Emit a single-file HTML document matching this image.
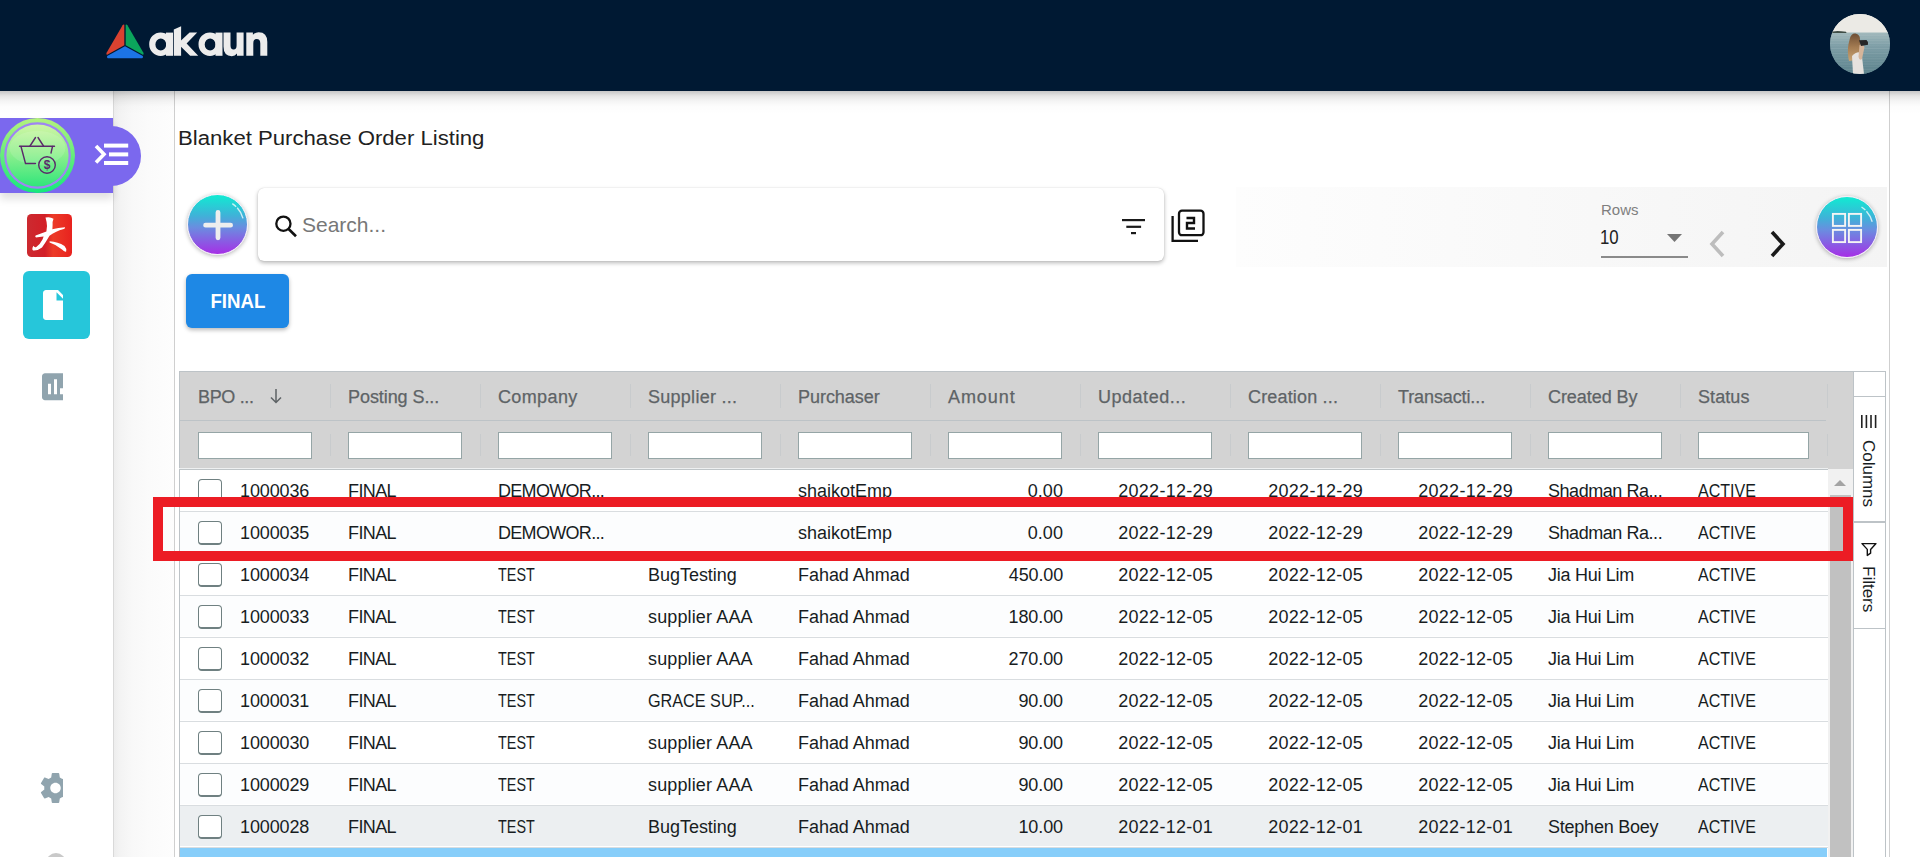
<!DOCTYPE html>
<html><head><meta charset="utf-8">
<style>
*{box-sizing:border-box;margin:0;padding:0}
html,body{width:1920px;height:857px;overflow:hidden;background:#fff;font-family:"Liberation Sans",sans-serif;position:relative}
.abs{position:absolute}
#topbar{left:0;top:0;width:1920px;height:91px;background:#001933;z-index:20}
#topshadow{left:0;top:91px;width:1920px;height:26px;background:linear-gradient(rgba(0,0,0,.22) 0,rgba(0,0,0,.2) 1px,rgba(0,0,0,.1) 5px,rgba(0,0,0,.045) 10px,rgba(0,0,0,.012) 15px,rgba(0,0,0,0) 23px);z-index:19}
#sidebar{left:0;top:91px;width:114px;height:766px;background:#fff;border-right:1px solid #d9d9d9;z-index:3}
#gutter{left:114px;top:91px;width:61px;height:766px;background:linear-gradient(90deg,#ededed 0,#f3f3f3 6px,#f8f8f8 18px,#fbfbfb 35px,#fdfdfd 60px);border-right:1px solid #cfcfcf;z-index:2}
#page{left:175px;top:91px;width:1715px;height:766px;background:#fff;border-right:1px solid #cfcfcf;z-index:1}
.title{left:178px;top:127px;font-size:20px;transform:scaleX(1.107);transform-origin:0 0;color:#212121;white-space:nowrap;z-index:4}
#logo-text{left:149px;top:15px;font-size:41px;font-weight:bold;color:#ececec;letter-spacing:-1px;z-index:21}
#avatar{left:1830px;top:14px;width:60px;height:60px;border-radius:50%;overflow:hidden;z-index:21;
  background:linear-gradient(#e9e7e2 0,#e9e7e2 28%,#8fa3a8 30%,#5f7f89 60%,#6b8a93 100%)}
/* purple bar */
#pbar{left:0;top:118px;width:113px;height:75px;background:#7b68ee;z-index:10;box-shadow:0 6px 8px rgba(0,0,0,.12)}
#pcap{left:80px;top:126px;width:61px;height:60px;border-radius:0 30px 30px 0;background:#7b68ee;z-index:10}
#gcircle{left:0;top:118px;width:75px;height:75px;border-radius:50%;background:#73ef7e;z-index:11}
#gcircle2{left:5px;top:123px;width:65px;height:65px;border-radius:50%;border:1.5px solid #9b7fe0;
  background:linear-gradient(#d6f7b4,#9cef8e 50%,#3fe06a);z-index:12}
/* toolbar */
#addfab{left:187px;top:194px;width:61px;height:61px;border-radius:50%;background:linear-gradient(#10ebd2,#3fb2d8 35%,#6a8de0 55%,#a62fe6);box-shadow:0 1px 4px rgba(0,0,0,.3);border:1.5px solid #f4eef8;z-index:4}
#search{left:258px;top:188px;width:906px;height:73px;border-radius:6px;background:#fff;box-shadow:0 2px 4px rgba(0,0,0,.28),0 0 1px rgba(0,0,0,.2);z-index:4}
#searchtxt{left:302px;top:213px;font-size:21px;color:#777;z-index:5}
#rowsbar{left:1236px;top:187px;width:651px;height:80px;background:linear-gradient(90deg,#fdfdfd 0%,#f8f8f8 55%,#f4f4f4 100%);z-index:3}
#rowslbl{left:1601px;top:201px;font-size:15px;color:#7f7f7f;z-index:4}
#rows10{left:1600px;top:226px;font-size:20px;color:#222;transform:scaleX(.84);transform-origin:0 0;z-index:4}
#rowsline{left:1601px;top:256px;width:87px;height:2px;background:#8a8a8a;z-index:4}
#gridfab{left:1816px;top:196px;width:62px;height:62px;border-radius:50%;background:linear-gradient(#10ebd2,#3fb2d8 35%,#6a8de0 55%,#a62fe6);box-shadow:0 1px 4px rgba(0,0,0,.3);border:1.5px solid #f4eef8;z-index:4}
#finalbtn{left:186px;top:274px;width:103px;height:54px;border-radius:6px;background:#1e88e5;box-shadow:0 2px 4px rgba(0,0,0,.28);color:#fff;font-weight:bold;font-size:21px;line-height:54px;text-align:center;z-index:4}
#finalbtn span{display:inline-block;transform:scaleX(.89);position:relative;top:-0.5px}
/* table */
#thead{left:179px;top:371px;width:1674px;height:98px;background:#d3d3d3;border-top:1px solid #bdc3c7;border-left:1px solid #bdc3c7;z-index:4}
#tbody{left:179px;top:469px;width:1674px;height:388px;background:#fff;border-left:1px solid #bdc3c7;border-top:1px solid #bdc3c7;z-index:4;overflow:hidden}
#hdline{left:179px;top:420px;width:1647px;height:1px;background:#bdc3c7;z-index:6}
#hdbot{left:179px;top:468px;width:1649px;height:2px;border-top:1px solid #eef0f1;background:#bfc5c8;z-index:6}
.hd{top:386.5px;font-size:18px;letter-spacing:-0.35px;color:#5e6366;-webkit-text-stroke:0.25px #5e6366;white-space:nowrap;z-index:6}
.fin{top:432px;height:27px;background:#fff;border:1px solid #95a5a6;z-index:6}
.sep1{top:384px;width:1px;height:24px;background:rgba(189,195,199,.5);z-index:6}
.sep2{top:434px;width:1px;height:22px;background:rgba(189,195,199,.5);z-index:6}
.arrow{left:270px;top:384px;font-size:18px;color:#646464;z-index:6}
.row{left:180px;width:1648px;height:42px;border-bottom:1px solid #d9dde0;box-shadow:inset 0 -1px 0 #fff;z-index:5}
.cb{left:18px;top:9px;width:24px;height:24px;border:1.6px solid #6f8081;border-bottom-width:2px;border-radius:4px;background:#fff}
.cell{top:10.5px;font-size:18px;letter-spacing:-0.4px;color:#181d1f;white-space:nowrap}
.cell.r{text-align:right}
#bluerow{left:180px;top:848px;width:1647px;height:12px;background:#87cefa;z-index:5}
#scroll{left:1828px;top:469px;width:25px;height:388px;background:#f1f1f1;z-index:6}
#thumb{left:1830px;top:495px;width:21px;height:362px;background:#c1c1c1;z-index:7}
#sidepanel{left:1853px;top:371px;width:33px;height:500px;background:#fff;border:1px solid #bdc3c7;z-index:6}
#redbox{left:153px;top:497px;width:1700px;height:64px;border:10px solid #ec1c24;z-index:15}
/* sidebar icons */
#cyansq{left:23px;top:271px;width:67px;height:68px;border-radius:6px;background:#26c6da;z-index:4}
</style></head><body>
<div id="topbar" class="abs"></div>
<div id="topshadow" class="abs"></div>
<div id="sidebar" class="abs"></div>
<div id="gutter" class="abs"></div>
<div id="page" class="abs"></div>

<!-- logo -->
<svg class="abs" style="left:0;top:0;z-index:21" width="300" height="91" viewBox="0 0 300 91">
  <path d="M124.3 24.8 Q123.5 24 122.6 25.2 L106.6 52.8 Q105.6 55 107.6 54.6 L124.3 45.2 Z" fill="#d94230"/>
  <path d="M125.7 24.8 Q126.5 24 127.4 25.2 L143.4 52.8 Q144.4 55 142.4 54.6 L125.7 45.2 Z" fill="#0ba55c"/>
  <path d="M125 46.3 L142.8 56 Q143.6 58.3 141 58.3 L109 58.3 Q106.4 58.3 107.2 56 Z" fill="#1c74e6"/>
  <g fill="#ececec" fill-rule="evenodd">
    <path d="M160.6 32.4 A11.4 11.8 0 1 0 160.6 56 A11.4 11.8 0 1 0 160.6 32.4 Z M160.8 38.4 A5.4 6 0 1 1 160.8 50.4 A5.4 6 0 1 1 160.8 38.4 Z"/>
    <rect x="166" y="32.6" width="7" height="23.2"/>
    <path d="M173.8 29.6 L181.1 26.2 L181.1 55.8 L173.8 55.8 Z"/>
    <path d="M180.5 41 L189.6 32.6 L197.2 32.6 L186.6 43.4 L198.2 55.8 L190.2 55.8 L180.5 46.2 Z"/>
    <path d="M209.9 32.4 A11.4 11.8 0 1 0 209.9 56 A11.4 11.8 0 1 0 209.9 32.4 Z M210.1 38.4 A5.4 6 0 1 1 210.1 50.4 A5.4 6 0 1 1 210.1 38.4 Z"/>
    <rect x="215.5" y="32.6" width="7" height="23.2"/>
    <path d="M223.5 32.6 H230.5 V45.2 Q230.5 49.6 233.6 49.6 Q236.6 49.6 236.6 45.2 V32.6 H243.6 V55.8 H237 V53.6 Q235 56.2 231.8 56.2 Q223.5 56.2 223.5 46.6 Z"/>
    <path d="M246.3 55.8 H253.3 V43.4 Q253.3 39 256.6 39 Q260.3 39 260.3 43.4 V55.8 H267.3 V42 Q267.3 32.2 258.6 32.2 Q255.2 32.2 252.9 34.8 V32.6 H246.3 Z"/>
  </g>
</svg>
<div id="avatar" class="abs">
  <svg width="60" height="60" viewBox="1830 14 60 60">
    <defs>
      <linearGradient id="sea" x1="0" y1="0" x2="0" y2="1"><stop offset="0" stop-color="#a3babd"/><stop offset=".3" stop-color="#7f9fa7"/><stop offset="1" stop-color="#5a818b"/></linearGradient>
      <linearGradient id="hair" x1="0" y1="0" x2="0" y2="1"><stop offset="0" stop-color="#6e4e34"/><stop offset=".5" stop-color="#a47c52"/><stop offset="1" stop-color="#c9a473"/></linearGradient>
    </defs>
    <rect x="1830" y="14" width="60" height="19" fill="#ebeae5"/>
    <rect x="1830" y="32.5" width="60" height="42" fill="url(#sea)"/>
    <rect x="1830" y="35.0" width="60" height="0.9" fill="rgba(255,255,255,0.06)"/><rect x="1830" y="37.6" width="60" height="0.9" fill="rgba(255,255,255,0.1)"/><rect x="1830" y="40.2" width="60" height="0.9" fill="rgba(255,255,255,0.06)"/><rect x="1830" y="42.8" width="60" height="0.9" fill="rgba(255,255,255,0.1)"/><rect x="1830" y="45.4" width="60" height="0.9" fill="rgba(255,255,255,0.06)"/><rect x="1830" y="48.0" width="60" height="0.9" fill="rgba(255,255,255,0.1)"/><rect x="1830" y="50.6" width="60" height="0.9" fill="rgba(255,255,255,0.06)"/><rect x="1830" y="53.2" width="60" height="0.9" fill="rgba(255,255,255,0.1)"/><rect x="1830" y="55.8" width="60" height="0.9" fill="rgba(255,255,255,0.06)"/><rect x="1830" y="58.4" width="60" height="0.9" fill="rgba(255,255,255,0.1)"/><rect x="1830" y="61.0" width="60" height="0.9" fill="rgba(255,255,255,0.06)"/><rect x="1830" y="63.6" width="60" height="0.9" fill="rgba(255,255,255,0.1)"/><rect x="1830" y="66.2" width="60" height="0.9" fill="rgba(255,255,255,0.06)"/><rect x="1830" y="68.8" width="60" height="0.9" fill="rgba(255,255,255,0.1)"/><rect x="1830" y="71.4" width="60" height="0.9" fill="rgba(255,255,255,0.06)"/>
    <path d="M1830 33 L1833 31.4 Q1838 30.6 1846 31.8 L1846.5 33 Z" fill="#3f4d46"/>
    <path d="M1850 38 Q1851.5 33 1855.5 33.5 Q1860 34.5 1860 39 L1860.5 48 Q1859 56 1856 60 L1849 61 Q1847 52 1848.5 44 Z" fill="url(#hair)"/>
    <path d="M1852 56 Q1856 51 1861.5 52.5 L1864 74 L1853 74 Z" fill="#e6e2de"/>
    <path d="M1859.5 45 Q1863 43 1864.5 47 L1862 59 Q1859.5 61 1858.5 57 Z" fill="#d6b59a"/>
    <path d="M1859 40.2 L1866.5 40 Q1868.6 41.5 1868 44.8 L1861 46 Z" fill="#262626"/>
  </svg>
</div>

<!-- purple menu bar -->
<div id="pbar" class="abs"></div>
<div id="pcap" class="abs"></div>
<svg class="abs" style="left:0;top:117px;z-index:11" width="76" height="77" viewBox="0 117 76 77">
  <defs>
    <linearGradient id="gr1" x1="0" y1="0" x2="0" y2="1"><stop offset="0" stop-color="#b5f27c"/><stop offset="1" stop-color="#14e87c"/></linearGradient>
    <linearGradient id="gr2" x1="0" y1="0" x2="0" y2="1"><stop offset="0" stop-color="#d2f6a6"/><stop offset=".45" stop-color="#92f08e"/><stop offset="1" stop-color="#2ee57a"/></linearGradient>
  </defs>
  <circle cx="37.5" cy="155.5" r="37.5" fill="url(#gr1)"/>
  <circle cx="37.5" cy="155.5" r="32.2" fill="url(#gr2)" stroke="#9f85f2" stroke-width="2.2"/>
  <ellipse cx="37.5" cy="148" rx="28" ry="17" fill="rgba(255,255,255,.12)"/>
  <g fill="none" stroke="#5a2a6a" stroke-width="1.4" stroke-linejoin="round" stroke-linecap="round">
    <path d="M19.5 146.3 L54.5 146.3"/>
    <path d="M30 146 L35.5 137.5 M38 137.5 L43.5 146"/>
    <path d="M21 146.5 L25.5 163.5 L35.5 163.5"/>
    <path d="M52.5 146.5 L51 153"/>
    <circle cx="47" cy="165" r="8.3"/>
  </g>
  <text x="47" y="169.3" font-size="12" font-family="Liberation Sans" font-weight="bold" fill="#5a2a6a" text-anchor="middle">$</text>
</svg>
<svg class="abs" style="left:90px;top:138px;z-index:13" width="42" height="32" viewBox="90 138 42 32">
  <path d="M96 146 L104 154.3 L96 162.6" fill="none" stroke="#fff" stroke-width="3.6"/>
  <rect x="104" y="143.6" width="24.2" height="4" fill="#fff"/>
  <rect x="109" y="152.4" width="19.2" height="4" fill="#fff"/>
  <rect x="104" y="161" width="24.2" height="4" fill="#fff"/>
</svg>

<!-- sidebar icons -->
<svg class="abs" style="left:27px;top:214px;z-index:4" width="45" height="43" viewBox="0 0 45 43">
  <defs><linearGradient id="rg" x1="0" x2="1"><stop offset="0" stop-color="#cc2a30"/><stop offset=".4" stop-color="#d21f27"/><stop offset=".58" stop-color="#ec3b28"/><stop offset="1" stop-color="#e8221e"/></linearGradient></defs>
  <rect x="0" y="0" width="45" height="43" rx="4.5" fill="url(#rg)"/>
  <path d="M18.5 3.6 Q23 2.4 26.5 4.8 Q25.2 8 25.6 11 L25.4 15.2 Q31 13.6 38 13.3 Q38.5 14.2 36.8 15 Q28 17.5 22.5 21.8 Q19 28 15 33.5 Q11 36.8 6 36.4 Q4.8 35.6 5.6 33.6 L6.4 31.8 Q7.2 33.6 9 33.2 Q13 30.5 15.5 25.5 L16.6 22.6 Q12 23.2 9 23.6 Q7.6 22.6 8.6 21.6 Q14 19.2 19.4 17.4 Q20.6 12 19.6 8 Z" fill="#fff"/>
  <path d="M22.6 27.2 Q31 27.6 37.5 32 Q40 34.8 39.2 37.6 Q37.4 38.2 35 35.6 Q29 30.6 22.6 28.6 Z" fill="#fff"/>
</svg>
<div id="cyansq" class="abs"></div>
<svg class="abs" style="left:0;top:91px;z-index:5" width="63" height="766" viewBox="0 91 63 766">
  <path transform="translate(37,287) scale(1.5)" d="M6 2c-1.1 0-2 .9-2 2L4 20c0 1.1.89 2 1.99 2H18c1.1 0 2-.9 2-2V8l-6-6H6zm7 7V3.5L18.5 9H13z" fill="#fff"/>
  <path transform="translate(37.5,368.8) scale(1.5)" d="M19 3H5c-1.1 0-2 .9-2 2v14c0 1.1.9 2 2 2h14c1.1 0 2-.9 2-2V5c0-1.1-.9-2-2-2zM9 17H7v-7h2v7zm4 0h-2V7h2v10zm4 0h-2v-4h2v4z" fill="#90a4ae"/>
  <path transform="translate(37.5,770) scale(1.5)" d="M19.43 12.98c.04-.32.07-.64.07-.98s-.03-.66-.07-.98l2.11-1.65c.19-.15.24-.42.12-.64l-2-3.46c-.12-.22-.39-.3-.61-.22l-2.49 1c-.52-.4-1.08-.73-1.690-.98l-.38-2.65C14.46 2.18 14.25 2 14 2h-4c-.25 0-.46.18-.49.42l-.38 2.65c-.61.25-1.17.59-1.69.98l-2.49-1c-.23-.09-.49 0-.61.22l-2 3.46c-.13.22-.07.49.12.64l2.110 1.65c-.04.32-.07.65-.07.98s.03.66.07.98l-2.11 1.65c-.19.15-.24.42-.12.64l2 3.46c.12.22.39.3.61.22l2.49-1c.52.4 1.08.73 1.69.98l.38 2.65c.03.24.24.42.49.42h4c.25 0 .46-.18.49-.42l.38-2.65c.61-.25 1.17-.59 1.69-.98l2.49 1c.23.09.49 0 .61-.22l2-3.46c.12-.22.07-.49-.12-.64l-2.11-1.65zM12 15.5c-1.93 0-3.5-1.57-3.5-3.5s1.57-3.5 3.5-3.5 3.5 1.57 3.5 3.5-1.57 3.5-3.5 3.5z" fill="#90a4ae"/>
</svg>
<div class="abs" style="left:46px;top:853px;width:20px;height:20px;border-radius:50%;background:#c9c9c9;z-index:4"></div>

<div class="abs title">Blanket Purchase Order Listing</div>

<!-- toolbar -->
<div id="addfab" class="abs"></div>
<svg class="abs" style="left:182px;top:188px;z-index:5" width="72" height="72" viewBox="182 188 72 72">
  <path d="M218 212.4 L218 237.8 M205.6 225.2 L230.6 225.2" stroke="#eeeeee" stroke-width="4.8" stroke-linecap="round"/>
  <path d="M232.3 203.6 A25.5 25.5 0 0 1 243 218.4" fill="none" stroke="rgba(255,255,255,.75)" stroke-width="1.4" stroke-dasharray="5 1.5 20"/>
</svg>
<div id="search" class="abs"></div>
<svg class="abs" style="left:274px;top:214px;z-index:5" width="24" height="24" viewBox="0 0 24 24">
  <circle cx="9.4" cy="9.7" r="7.1" fill="none" stroke="#111" stroke-width="2.3"/>
  <path d="M14.6 15 L22 22.3" stroke="#111" stroke-width="2.6"/>
</svg>
<div id="searchtxt" class="abs">Search...</div>
<svg class="abs" style="left:1122px;top:219px;z-index:5" width="24" height="16" viewBox="0 0 24 16">
  <rect x="0" y="0" width="23" height="2.2" fill="#1a1a1a"/>
  <rect x="4.3" y="6.7" width="14.8" height="2.2" fill="#1a1a1a"/>
  <rect x="9" y="13" width="5" height="2.2" fill="#1a1a1a"/>
</svg>
<svg class="abs" style="left:1171px;top:209px;z-index:5" width="34" height="34" viewBox="0 0 34 34">
  <path d="M1.6 7 L1.6 31.8 L27 31.8" fill="none" stroke="#111" stroke-width="2.3"/>
  <rect x="8" y="1.7" width="24.5" height="24.5" rx="3" fill="none" stroke="#111" stroke-width="2.3"/>
  <path d="M15.5 9 L23 9 L23 14 L16 14 L16 19.5 L24 19.5" fill="none" stroke="#111" stroke-width="2.4"/>
</svg>

<div id="rowsbar" class="abs"></div>
<div id="rowslbl" class="abs">Rows</div>
<div id="rows10" class="abs">10</div>
<div id="rowsline" class="abs"></div>
<svg class="abs" style="left:1667px;top:234px;z-index:5" width="15" height="8" viewBox="0 0 15 8"><path d="M0 0 L15 0 L7.5 8 Z" fill="#757575"/></svg>
<svg class="abs" style="left:1707px;top:230px;z-index:5" width="20" height="28" viewBox="0 0 20 28"><path d="M16 2 L5 14 L16 26" fill="none" stroke="#bdbdbd" stroke-width="3.6"/></svg>
<svg class="abs" style="left:1768px;top:230px;z-index:5" width="20" height="28" viewBox="0 0 20 28"><path d="M4 2 L15 14 L4 26" fill="none" stroke="#1a1a1a" stroke-width="3.6"/></svg>
<div id="gridfab" class="abs"></div>
<svg class="abs" style="left:1811px;top:191px;z-index:5" width="72" height="72" viewBox="1811 191 72 72">
  <path d="M1861.5 207 A25.5 25.5 0 0 1 1872.2 221.8" fill="none" stroke="rgba(255,255,255,.75)" stroke-width="1.4" stroke-dasharray="5 1.5 20"/>
</svg>
<svg class="abs" style="left:1825px;top:205px;z-index:5" width="45" height="45" viewBox="1825 205 45 45">
  <g fill="none" stroke="#f4f4f4" stroke-width="1.9">
    <rect x="1832.9" y="213.9" width="12.2" height="12"/>
    <rect x="1848.9" y="213.9" width="12.2" height="12"/>
    <rect x="1832.9" y="229.9" width="12.2" height="12.2"/>
    <rect x="1848.9" y="229.9" width="12.2" height="12.2"/>
  </g>
</svg>

<div id="finalbtn" class="abs"><span>FINAL</span></div>

<!-- table -->
<div id="thead" class="abs"></div>
<div id="hdline" class="abs"></div>
<div id="hdbot" class="abs"></div>
<div id="tbody" class="abs"></div>
<div class="abs hd" style="left:198px;letter-spacing:-0.33px">BPO ...</div>
<div class="abs fin" style="left:198px;width:114px"></div>
<div class="abs sep1" style="left:330px"></div><div class="abs sep2" style="left:330px"></div>
<div class="abs hd" style="left:348px;letter-spacing:-0.07px">Posting S...</div>
<div class="abs fin" style="left:348px;width:114px"></div>
<div class="abs sep1" style="left:480px"></div><div class="abs sep2" style="left:480px"></div>
<div class="abs hd" style="left:498px;letter-spacing:0.37px">Company</div>
<div class="abs fin" style="left:498px;width:114px"></div>
<div class="abs sep1" style="left:630px"></div><div class="abs sep2" style="left:630px"></div>
<div class="abs hd" style="left:648px;letter-spacing:0.27px">Supplier ...</div>
<div class="abs fin" style="left:648px;width:114px"></div>
<div class="abs sep1" style="left:780px"></div><div class="abs sep2" style="left:780px"></div>
<div class="abs hd" style="left:798px;letter-spacing:-0.04px">Purchaser</div>
<div class="abs fin" style="left:798px;width:114px"></div>
<div class="abs sep1" style="left:930px"></div><div class="abs sep2" style="left:930px"></div>
<div class="abs hd" style="left:948px;letter-spacing:0.92px">Amount</div>
<div class="abs fin" style="left:948px;width:114px"></div>
<div class="abs sep1" style="left:1080px"></div><div class="abs sep2" style="left:1080px"></div>
<div class="abs hd" style="left:1098px;letter-spacing:0.52px">Updated...</div>
<div class="abs fin" style="left:1098px;width:114px"></div>
<div class="abs sep1" style="left:1230px"></div><div class="abs sep2" style="left:1230px"></div>
<div class="abs hd" style="left:1248px;letter-spacing:0.17px">Creation ...</div>
<div class="abs fin" style="left:1248px;width:114px"></div>
<div class="abs sep1" style="left:1380px"></div><div class="abs sep2" style="left:1380px"></div>
<div class="abs hd" style="left:1398px;letter-spacing:-0.11px">Transacti...</div>
<div class="abs fin" style="left:1398px;width:114px"></div>
<div class="abs sep1" style="left:1530px"></div><div class="abs sep2" style="left:1530px"></div>
<div class="abs hd" style="left:1548px;letter-spacing:-0.06px">Created By</div>
<div class="abs fin" style="left:1548px;width:114px"></div>
<div class="abs sep1" style="left:1680px"></div><div class="abs sep2" style="left:1680px"></div>
<div class="abs hd" style="left:1698px;letter-spacing:0.08px">Status</div>
<div class="abs fin" style="left:1698px;width:111px"></div>
<div class="abs sep1" style="left:1827px"></div><div class="abs sep2" style="left:1827px"></div>
<svg class="abs" style="left:268px;top:386px;z-index:6" width="16" height="20" viewBox="268 386 16 20"><path d="M276 389 L276 402.5 M271 397.5 L276 402.5 L281 397.5" fill="none" stroke="#5e6366" stroke-width="1.5"/></svg>
<div class="abs row" style="top:470px;background:#fff">
<div class="abs cb"></div>
<div class="abs cell" style="left:60px;letter-spacing:-0.12px">1000036</div>
<div class="abs cell" style="left:168px;letter-spacing:-0.62px">FINAL</div>
<div class="abs cell" style="left:318px;letter-spacing:-0.69px">DEMOWOR...</div>
<div class="abs cell" style="left:468px;letter-spacing:-0.2px"></div>
<div class="abs cell" style="left:618px;letter-spacing:0.0px">shaikotEmp</div>
<div class="abs cell r" style="left:750px;width:133px;letter-spacing:0.07px">0.00</div>
<div class="abs cell r" style="left:900px;width:133px;letter-spacing:0.26px">2022-12-29</div>
<div class="abs cell r" style="left:1050px;width:133px;letter-spacing:0.26px">2022-12-29</div>
<div class="abs cell r" style="left:1200px;width:133px;letter-spacing:0.26px">2022-12-29</div>
<div class="abs cell" style="left:1368px;letter-spacing:-0.45px">Shadman Ra...</div>
<div class="abs cell" style="left:1518px;letter-spacing:0;transform:scaleX(0.892);transform-origin:0 0">ACTIVE</div>
</div>
<div class="abs row" style="top:512px;background:#fcfdfe">
<div class="abs cb"></div>
<div class="abs cell" style="left:60px;letter-spacing:-0.12px">1000035</div>
<div class="abs cell" style="left:168px;letter-spacing:-0.62px">FINAL</div>
<div class="abs cell" style="left:318px;letter-spacing:-0.69px">DEMOWOR...</div>
<div class="abs cell" style="left:468px;letter-spacing:-0.2px"></div>
<div class="abs cell" style="left:618px;letter-spacing:0.0px">shaikotEmp</div>
<div class="abs cell r" style="left:750px;width:133px;letter-spacing:0.07px">0.00</div>
<div class="abs cell r" style="left:900px;width:133px;letter-spacing:0.26px">2022-12-29</div>
<div class="abs cell r" style="left:1050px;width:133px;letter-spacing:0.26px">2022-12-29</div>
<div class="abs cell r" style="left:1200px;width:133px;letter-spacing:0.26px">2022-12-29</div>
<div class="abs cell" style="left:1368px;letter-spacing:-0.45px">Shadman Ra...</div>
<div class="abs cell" style="left:1518px;letter-spacing:0;transform:scaleX(0.892);transform-origin:0 0">ACTIVE</div>
</div>
<div class="abs row" style="top:554px;background:#fff">
<div class="abs cb"></div>
<div class="abs cell" style="left:60px;letter-spacing:-0.12px">1000034</div>
<div class="abs cell" style="left:168px;letter-spacing:-0.62px">FINAL</div>
<div class="abs cell" style="left:318px;letter-spacing:0;transform:scaleX(0.800);transform-origin:0 0">TEST</div>
<div class="abs cell" style="left:468px;letter-spacing:-0.03px">BugTesting</div>
<div class="abs cell" style="left:618px;letter-spacing:-0.04px">Fahad Ahmad</div>
<div class="abs cell r" style="left:750px;width:133px;letter-spacing:-0.14px">450.00</div>
<div class="abs cell r" style="left:900px;width:133px;letter-spacing:0.26px">2022-12-05</div>
<div class="abs cell r" style="left:1050px;width:133px;letter-spacing:0.26px">2022-12-05</div>
<div class="abs cell r" style="left:1200px;width:133px;letter-spacing:0.26px">2022-12-05</div>
<div class="abs cell" style="left:1368px;letter-spacing:-0.27px">Jia Hui Lim</div>
<div class="abs cell" style="left:1518px;letter-spacing:0;transform:scaleX(0.892);transform-origin:0 0">ACTIVE</div>
</div>
<div class="abs row" style="top:596px;background:#fcfdfe">
<div class="abs cb"></div>
<div class="abs cell" style="left:60px;letter-spacing:-0.12px">1000033</div>
<div class="abs cell" style="left:168px;letter-spacing:-0.62px">FINAL</div>
<div class="abs cell" style="left:318px;letter-spacing:0;transform:scaleX(0.800);transform-origin:0 0">TEST</div>
<div class="abs cell" style="left:468px;letter-spacing:0.14px">supplier AAA</div>
<div class="abs cell" style="left:618px;letter-spacing:-0.04px">Fahad Ahmad</div>
<div class="abs cell r" style="left:750px;width:133px;letter-spacing:-0.1px">180.00</div>
<div class="abs cell r" style="left:900px;width:133px;letter-spacing:0.26px">2022-12-05</div>
<div class="abs cell r" style="left:1050px;width:133px;letter-spacing:0.26px">2022-12-05</div>
<div class="abs cell r" style="left:1200px;width:133px;letter-spacing:0.26px">2022-12-05</div>
<div class="abs cell" style="left:1368px;letter-spacing:-0.27px">Jia Hui Lim</div>
<div class="abs cell" style="left:1518px;letter-spacing:0;transform:scaleX(0.892);transform-origin:0 0">ACTIVE</div>
</div>
<div class="abs row" style="top:638px;background:#fff">
<div class="abs cb"></div>
<div class="abs cell" style="left:60px;letter-spacing:-0.12px">1000032</div>
<div class="abs cell" style="left:168px;letter-spacing:-0.62px">FINAL</div>
<div class="abs cell" style="left:318px;letter-spacing:0;transform:scaleX(0.800);transform-origin:0 0">TEST</div>
<div class="abs cell" style="left:468px;letter-spacing:0.14px">supplier AAA</div>
<div class="abs cell" style="left:618px;letter-spacing:-0.04px">Fahad Ahmad</div>
<div class="abs cell r" style="left:750px;width:133px;letter-spacing:-0.1px">270.00</div>
<div class="abs cell r" style="left:900px;width:133px;letter-spacing:0.26px">2022-12-05</div>
<div class="abs cell r" style="left:1050px;width:133px;letter-spacing:0.26px">2022-12-05</div>
<div class="abs cell r" style="left:1200px;width:133px;letter-spacing:0.26px">2022-12-05</div>
<div class="abs cell" style="left:1368px;letter-spacing:-0.27px">Jia Hui Lim</div>
<div class="abs cell" style="left:1518px;letter-spacing:0;transform:scaleX(0.892);transform-origin:0 0">ACTIVE</div>
</div>
<div class="abs row" style="top:680px;background:#fcfdfe">
<div class="abs cb"></div>
<div class="abs cell" style="left:60px;letter-spacing:-0.12px">1000031</div>
<div class="abs cell" style="left:168px;letter-spacing:-0.62px">FINAL</div>
<div class="abs cell" style="left:318px;letter-spacing:0;transform:scaleX(0.800);transform-origin:0 0">TEST</div>
<div class="abs cell" style="left:468px;letter-spacing:0;transform:scaleX(0.900);transform-origin:0 0">GRACE SUP...</div>
<div class="abs cell" style="left:618px;letter-spacing:-0.04px">Fahad Ahmad</div>
<div class="abs cell r" style="left:750px;width:133px;letter-spacing:-0.1px">90.00</div>
<div class="abs cell r" style="left:900px;width:133px;letter-spacing:0.26px">2022-12-05</div>
<div class="abs cell r" style="left:1050px;width:133px;letter-spacing:0.26px">2022-12-05</div>
<div class="abs cell r" style="left:1200px;width:133px;letter-spacing:0.26px">2022-12-05</div>
<div class="abs cell" style="left:1368px;letter-spacing:-0.27px">Jia Hui Lim</div>
<div class="abs cell" style="left:1518px;letter-spacing:0;transform:scaleX(0.892);transform-origin:0 0">ACTIVE</div>
</div>
<div class="abs row" style="top:722px;background:#fff">
<div class="abs cb"></div>
<div class="abs cell" style="left:60px;letter-spacing:-0.12px">1000030</div>
<div class="abs cell" style="left:168px;letter-spacing:-0.62px">FINAL</div>
<div class="abs cell" style="left:318px;letter-spacing:0;transform:scaleX(0.800);transform-origin:0 0">TEST</div>
<div class="abs cell" style="left:468px;letter-spacing:0.14px">supplier AAA</div>
<div class="abs cell" style="left:618px;letter-spacing:-0.04px">Fahad Ahmad</div>
<div class="abs cell r" style="left:750px;width:133px;letter-spacing:-0.1px">90.00</div>
<div class="abs cell r" style="left:900px;width:133px;letter-spacing:0.26px">2022-12-05</div>
<div class="abs cell r" style="left:1050px;width:133px;letter-spacing:0.26px">2022-12-05</div>
<div class="abs cell r" style="left:1200px;width:133px;letter-spacing:0.26px">2022-12-05</div>
<div class="abs cell" style="left:1368px;letter-spacing:-0.27px">Jia Hui Lim</div>
<div class="abs cell" style="left:1518px;letter-spacing:0;transform:scaleX(0.892);transform-origin:0 0">ACTIVE</div>
</div>
<div class="abs row" style="top:764px;background:#fcfdfe">
<div class="abs cb"></div>
<div class="abs cell" style="left:60px;letter-spacing:-0.12px">1000029</div>
<div class="abs cell" style="left:168px;letter-spacing:-0.62px">FINAL</div>
<div class="abs cell" style="left:318px;letter-spacing:0;transform:scaleX(0.800);transform-origin:0 0">TEST</div>
<div class="abs cell" style="left:468px;letter-spacing:0.14px">supplier AAA</div>
<div class="abs cell" style="left:618px;letter-spacing:-0.04px">Fahad Ahmad</div>
<div class="abs cell r" style="left:750px;width:133px;letter-spacing:-0.1px">90.00</div>
<div class="abs cell r" style="left:900px;width:133px;letter-spacing:0.26px">2022-12-05</div>
<div class="abs cell r" style="left:1050px;width:133px;letter-spacing:0.26px">2022-12-05</div>
<div class="abs cell r" style="left:1200px;width:133px;letter-spacing:0.26px">2022-12-05</div>
<div class="abs cell" style="left:1368px;letter-spacing:-0.27px">Jia Hui Lim</div>
<div class="abs cell" style="left:1518px;letter-spacing:0;transform:scaleX(0.892);transform-origin:0 0">ACTIVE</div>
</div>
<div class="abs row" style="top:806px;background:#eceff1">
<div class="abs cb"></div>
<div class="abs cell" style="left:60px;letter-spacing:-0.12px">1000028</div>
<div class="abs cell" style="left:168px;letter-spacing:-0.62px">FINAL</div>
<div class="abs cell" style="left:318px;letter-spacing:0;transform:scaleX(0.800);transform-origin:0 0">TEST</div>
<div class="abs cell" style="left:468px;letter-spacing:-0.03px">BugTesting</div>
<div class="abs cell" style="left:618px;letter-spacing:-0.04px">Fahad Ahmad</div>
<div class="abs cell r" style="left:750px;width:133px;letter-spacing:-0.1px">10.00</div>
<div class="abs cell r" style="left:900px;width:133px;letter-spacing:0.26px">2022-12-01</div>
<div class="abs cell r" style="left:1050px;width:133px;letter-spacing:0.26px">2022-12-01</div>
<div class="abs cell r" style="left:1200px;width:133px;letter-spacing:0.26px">2022-12-01</div>
<div class="abs cell" style="left:1368px;letter-spacing:-0.23px">Stephen Boey</div>
<div class="abs cell" style="left:1518px;letter-spacing:0;transform:scaleX(0.892);transform-origin:0 0">ACTIVE</div>
</div>
<div id="bluerow" class="abs"></div>
<div id="scroll" class="abs"></div>
<svg class="abs" style="left:1834px;top:479px;z-index:7" width="12" height="8" viewBox="0 0 12 8"><path d="M0 7 L6 1 L12 7 Z" fill="#a3a3a3"/></svg>
<div id="thumb" class="abs"></div>
<div id="sidepanel" class="abs"></div>
<div class="abs" style="left:1854px;top:396px;width:31px;height:1px;background:#bdc3c7;z-index:7"></div>
<div class="abs" style="left:1854px;top:521px;width:31px;height:2px;background:#bdc3c7;z-index:7"></div>
<div class="abs" style="left:1854px;top:628px;width:31px;height:1px;background:#bdc3c7;z-index:7"></div>
<svg class="abs" style="left:1861px;top:415px;z-index:7" width="18" height="16" viewBox="0 0 18 16">
  <rect x="0" y="0" width="1.6" height="13" fill="#222"/><rect x="4.6" y="0" width="1.6" height="13" fill="#222"/>
  <rect x="9.2" y="0" width="1.6" height="13" fill="#222"/><rect x="13.8" y="0" width="1.6" height="13" fill="#222"/>
</svg>
<div class="abs" style="left:1858px;top:440px;width:20px;height:72px;z-index:7">
  <div style="position:absolute;left:0;top:0;transform-origin:0 0;transform:translate(0px,0px) rotate(90deg) translate(0,-20px);font-size:17px;color:#181d1f;white-space:nowrap;line-height:20px">Columns</div>
</div>
<svg class="abs" style="left:1855px;top:535px;z-index:7" width="30" height="30" viewBox="1855 535 30 30">
  <path d="M1862 543.6 L1876 543.6 L1870.6 549.4 L1870.6 553.2 L1867.3 555.4 L1867.3 549.4 Z" fill="none" stroke="#111" stroke-width="1.4" stroke-linejoin="round"/>
</svg>
<div class="abs" style="left:1858px;top:566px;width:20px;height:54px;z-index:7">
  <div style="position:absolute;left:0;top:0;transform-origin:0 0;transform:rotate(90deg) translate(0,-20px);font-size:17px;color:#181d1f;white-space:nowrap;line-height:20px">Filters</div>
</div>

<div id="redbox" class="abs"></div>
</body></html>
